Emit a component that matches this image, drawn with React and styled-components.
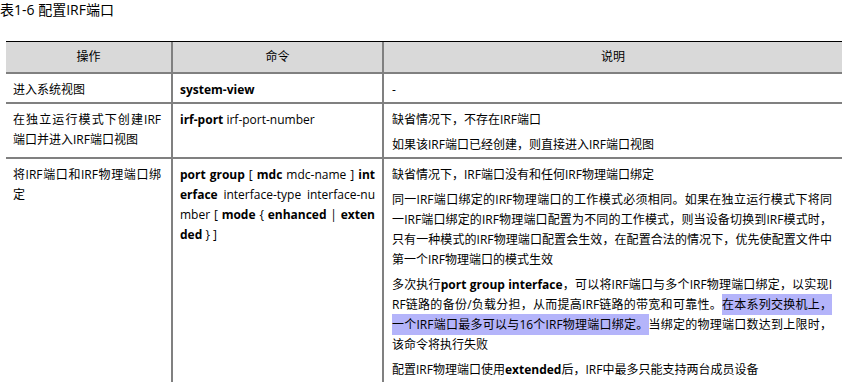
import React from 'react'
import styled, { createGlobalStyle } from 'styled-components'

const GlobalStyle = createGlobalStyle`
  body {
    margin: 0;
    background: #fff;
    color: #000;
    font-family: "Open Sans", "Noto Sans CJK SC", sans-serif;
  }
`

const Page = styled.div`
  width: 849px;
`

const Caption = styled.div`
  font-size: 14px;
  line-height: 20px;
  height: 20px;
`

const Grid = styled.div`
  display: grid;
  grid-template-columns: 167px 211px 458px;
  width: 836px;
  margin: 21px 0 0 6px;
  border-top: 1px solid #000;
  font-size: 12px;
  line-height: 20px;
`

const HeadCell = styled.div`
  background: #d9d9d9;
  text-align: center;
  padding: 5px 0;
  border-bottom: 2px solid #808080;
  border-right: ${p => (p.$last ? 'none' : '2px solid #808080')};
`

const Cell = styled.div`
  padding: ${p => p.$pad || '6px 8px 2px 7px'};
  border-bottom: 2px solid #808080;
  border-right: ${p => (p.$last ? 'none' : '2px solid #808080')};
  word-break: ${p => (p.$breakAll ? 'break-all' : 'normal')};
`

const P = styled.p`
  margin: 0;
  text-align: justify;
  & + & {
    margin-top: 5px;
  }
`

const Kw = styled.b`
  font-weight: 700;
`

const Mark = styled.span`
  background: #b4b4fa;
  padding: 2px 0;
`

const rows = [
  {
    op: '进入系统视图',
    cmd: <Kw>system-view</Kw>,
    desc: ['-'],
  },
  {
    op: '在独立运行模式下创建IRF端口并进入IRF端口视图',
    cmd: (
      <>
        <Kw>irf-port</Kw> irf-port-number
      </>
    ),
    desc: ['缺省情况下，不存在IRF端口', '如果该IRF端口已经创建，则直接进入IRF端口视图'],
  },
  {
    op: '将IRF端口和IRF物理端口绑定',
    cmd: (
      <>
        <Kw>port group</Kw> [ <Kw>mdc</Kw> mdc-name ] <Kw>interface</Kw> interface-type
        interface-number [ <Kw>mode</Kw> {'{'} <Kw>enhanced</Kw> | <Kw>extended</Kw> {'}'} ]
      </>
    ),
    desc: [
      '缺省情况下，IRF端口没有和任何IRF物理端口绑定',
      '同一IRF端口绑定的IRF物理端口的工作模式必须相同。如果在独立运行模式下将同一IRF端口绑定的IRF物理端口配置为不同的工作模式，则当设备切换到IRF模式时，只有一种模式的IRF物理端口配置会生效，在配置合法的情况下，优先使配置文件中第一个IRF物理端口的模式生效',
      <>
        多次执行<Kw>port group interface</Kw>，可以将IRF端口与多个IRF物理端口绑定，以实现IRF链路的备份/负载分担，从而提高IRF链路的带宽和可靠性。
        <Mark>在本系列交换机上，一个IRF端口最多可以与16个IRF物理端口绑定。</Mark>
        当绑定的物理端口数达到上限时，该命令将执行失败
      </>,
      <>
        配置IRF物理端口使用<Kw>extended</Kw>后，IRF中最多只能支持两台成员设备
      </>,
    ],
  },
]

export default function App() {
  return (
    <Page>
      <GlobalStyle />
      <Caption>表1-6 配置IRF端口</Caption>
      <Grid>
        <HeadCell>操作</HeadCell>
        <HeadCell>命令</HeadCell>
        <HeadCell $last>说明</HeadCell>
        {rows.map((r, i) => (
          <React.Fragment key={i}>
            <Cell $pad="6px 10px 2px 7px">
              <P>{r.op}</P>
            </Cell>
            <Cell $pad="6px 7px 2px 7px" $breakAll>
              <P>{r.cmd}</P>
            </Cell>
            <Cell $pad="6px 10px 2px 8px" $last $breakAll>
              {r.desc.map((d, j) => (
                <P key={j}>{d}</P>
              ))}
            </Cell>
          </React.Fragment>
        ))}
      </Grid>
    </Page>
  )
}
